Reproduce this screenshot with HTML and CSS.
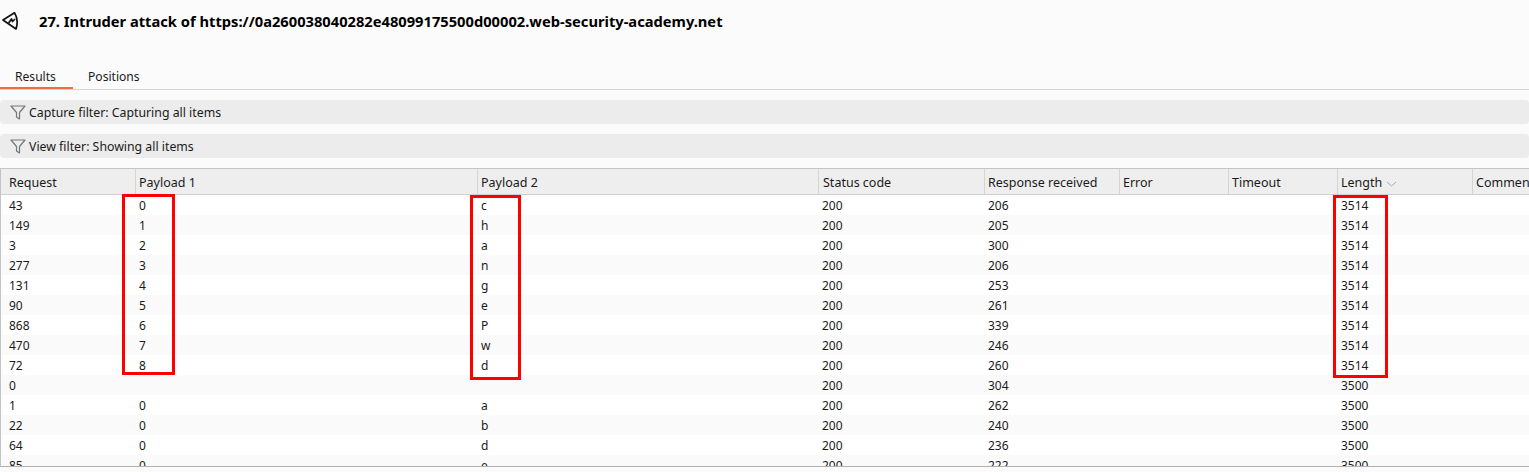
FILE: index.html
```html
<!DOCTYPE html>
<html lang="en">
<head>
<meta charset="utf-8">
<title>Intruder attack</title>
<link rel="stylesheet" href="styles.css">
</head>
<body>
<header class="title-bar">
  <svg class="logo" width="18" height="20" viewBox="0 0 18 20" fill="none" stroke="#111" stroke-width="1.7" stroke-linejoin="round" stroke-linecap="round">
    <path d="M2 9 L13.5 1.8 C16.8 7 16.8 12.5 15 18 Z"/>
    <path d="M8 11.5 L10.5 8 L11.5 10.5 L13.5 8.5"/>
  </svg>
  <h1 class="title">27. Intruder attack of https://0a260038040282e48099175500d00002.web-security-academy.net</h1>
</header>
<nav class="tabs">
  <div class="tab active">Results</div>
  <div class="tab">Positions</div>
</nav>
<div class="filter capture"><svg class="funnel" width="16" height="16" viewBox="0 0 16 16" fill="none" stroke="#777" stroke-width="1.2" stroke-linejoin="round"><path d="M1 2 H15 L9.5 8.5 V15 L6.5 13 V8.5 Z"/></svg><span>Capture filter: Capturing all items</span></div>
<div class="filter view"><svg class="funnel" width="16" height="16" viewBox="0 0 16 16" fill="none" stroke="#777" stroke-width="1.2" stroke-linejoin="round"><path d="M1 2 H15 L9.5 8.5 V15 L6.5 13 V8.5 Z"/></svg><span>View filter: Showing all items</span></div>
<main class="table">
  <div class="row head">
    <div>Request</div><div>Payload 1</div><div>Payload 2</div><div>Status code</div><div>Response received</div><div>Error</div><div>Timeout</div><div>Length<svg class="sort" width="11" height="6" viewBox="0 0 11 6" fill="none" stroke="#aaa" stroke-width="1"><path d="M1 1 L5.5 5 L10 1"/></svg></div><div>Comment</div>
  </div>
  <div class="row"><div>43</div><div>0</div><div>c</div><div>200</div><div>206</div><div></div><div></div><div>3514</div><div></div></div>
  <div class="row"><div>149</div><div>1</div><div>h</div><div>200</div><div>205</div><div></div><div></div><div>3514</div><div></div></div>
  <div class="row"><div>3</div><div>2</div><div>a</div><div>200</div><div>300</div><div></div><div></div><div>3514</div><div></div></div>
  <div class="row"><div>277</div><div>3</div><div>n</div><div>200</div><div>206</div><div></div><div></div><div>3514</div><div></div></div>
  <div class="row"><div>131</div><div>4</div><div>g</div><div>200</div><div>253</div><div></div><div></div><div>3514</div><div></div></div>
  <div class="row"><div>90</div><div>5</div><div>e</div><div>200</div><div>261</div><div></div><div></div><div>3514</div><div></div></div>
  <div class="row"><div>868</div><div>6</div><div>P</div><div>200</div><div>339</div><div></div><div></div><div>3514</div><div></div></div>
  <div class="row"><div>470</div><div>7</div><div>w</div><div>200</div><div>246</div><div></div><div></div><div>3514</div><div></div></div>
  <div class="row"><div>72</div><div>8</div><div>d</div><div>200</div><div>260</div><div></div><div></div><div>3514</div><div></div></div>
  <div class="row"><div>0</div><div></div><div></div><div>200</div><div>304</div><div></div><div></div><div>3500</div><div></div></div>
  <div class="row"><div>1</div><div>0</div><div>a</div><div>200</div><div>262</div><div></div><div></div><div>3500</div><div></div></div>
  <div class="row"><div>22</div><div>0</div><div>b</div><div>200</div><div>240</div><div></div><div></div><div>3500</div><div></div></div>
  <div class="row"><div>64</div><div>0</div><div>d</div><div>200</div><div>236</div><div></div><div></div><div>3500</div><div></div></div>
  <div class="row"><div>85</div><div>0</div><div>e</div><div>200</div><div>222</div><div></div><div></div><div>3500</div><div></div></div>
  <div class="mark mark-p1"></div>
  <div class="mark mark-p2"></div>
  <div class="mark mark-len"></div>
</main>
</body>
</html>
```
FILE: styles.css
```css
* { box-sizing: border-box; }
html, body { margin: 0; height: 472px; overflow: hidden; }
body {
  background: #fbfbfb;
  color: #1a1a1a;
  font: 12px/20px "Noto Sans", "Open Sans", sans-serif;
}
.title-bar {
  display: flex;
  align-items: center;
  height: 44px;
  padding: 0 0 2px 1px;
}
.logo { flex: none; }
.title {
  margin: 0 0 0 20px;
  font-size: 14.7px;
  font-weight: 700;
  color: #000;
  white-space: nowrap;
}
.tabs {
  display: flex;
  height: 46px;
  padding-top: 23px;
  border-bottom: 1px solid #d4d4d4;
  font-size: 12.1px;
}
.tab { padding: 0 15px; height: 22px; line-height: 20px; }
.tab.active { width: 73px; border-bottom: 2px solid #f26a3d; margin-bottom: -1px; }
.filter {
  display: flex;
  align-items: center;
  gap: 3px;
  height: 24px;
  padding-left: 10px;
  padding-top: 1px;
  background: #ececec;
  border-radius: 4px;
  font-size: 12.3px;
}
.funnel { margin-top: -1px; }
.capture { margin-top: 10px; }
.view { margin-top: 10px; }
.table {
  position: relative;
  height: 299px;
  margin-top: 10px;
  overflow: hidden;
  background: #fff;
  border-top: 1px solid #c4c4c4;
  border-left: 1px solid #c4c4c4;
  border-bottom: 1px solid #b5b0b0;
}
.row {
  display: grid;
  grid-template-columns: 134px 342px 341px 166px 135px 109px 109px 135px 1fr;
  height: 20px;
}
.row > div { padding-left: 8px; padding-top: 1px; white-space: nowrap; overflow: hidden; }
.row > div:nth-child(n+2) { padding-left: 4px; }
.row:nth-child(odd) { background: #fafafa; }
.row.head {
  height: 26px;
  background: #eeeeee;
  border-bottom: 1px solid #d0d0d0;
  font-size: 12.5px;
}
.row.head > div { padding-top: 4px; }
.row.head > div:nth-child(n+2) { border-left: 1px solid #d4d4d4; padding-left: 3px; }
.row.head > div:nth-child(4) { padding-left: 4px; }
.sort { vertical-align: 0; margin-left: 4px; }
.mark {
  position: absolute;
  border: 3px solid #f00;
  pointer-events: none;
}
.mark-p1 { left: 121px; top: 25px; width: 53px; height: 181px; }
.mark-p2 { left: 469px; top: 26px; width: 51px; height: 185px; }
.mark-len { left: 1332px; top: 26px; width: 55px; height: 183px; }
```
